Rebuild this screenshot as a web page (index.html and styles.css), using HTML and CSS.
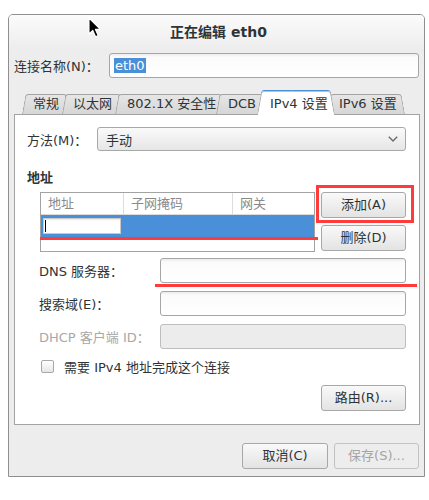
FILE: index.html
```html
<!DOCTYPE html>
<html lang="zh-CN">
<head>
<meta charset="utf-8">
<title>正在编辑 eth0</title>
<link rel="stylesheet" href="styles.css">
</head>
<body>
<div class="dialog">
  <div class="titlebar">正在编辑 eth0</div>
  <div class="name-row">
    <span class="name-label">连接名称(N)：</span>
    <div class="entry name-entry"><span class="sel">eth0</span></div>
  </div>
  <div class="tabs">
    <div class="tab t1">常规</div>
    <div class="tab t2">以太网</div>
    <div class="tab t3">802.1X 安全性</div>
    <div class="tab t4">DCB</div>
    <div class="tab t5 active">IPv4 设置</div>
    <div class="tab t6">IPv6 设置</div>
  </div>
  <div class="panel">
    <div class="method-row">
      <span class="method-label">方法(M)：</span>
      <div class="combo">
        <span>手动</span>
        <svg class="chev" width="10" height="6" viewBox="0 0 10 6"><polyline points="0.8,0.8 5,5 9.2,0.8" fill="none" stroke="#6b6b6b" stroke-width="1.4"/></svg>
      </div>
    </div>
    <div class="heading">地址</div>
    <div class="addr">
      <div class="table">
        <div class="thead">
          <div class="th c1">地址</div>
          <div class="th c2">子网掩码</div>
          <div class="th c3">网关</div>
        </div>
        <div class="row-sel">
          <div class="editor"><span class="caret"></span></div>
        </div>
        <div class="mark-line"></div>
      </div>
      <div class="addr-btns">
        <div class="btn">添加(A)</div>
        <div class="btn">删除(D)</div>
        <div class="mark-box"></div>
      </div>
    </div>
    <div class="field dns">
      <span class="flabel">DNS 服务器：</span>
      <div class="entry"></div>
      <div class="mark-line2"></div>
    </div>
    <div class="field">
      <span class="flabel">搜索域(E)：</span>
      <div class="entry"></div>
    </div>
    <div class="field">
      <span class="flabel disabled">DHCP 客户端 ID：</span>
      <div class="entry off"></div>
    </div>
    <div class="check-row">
      <span class="checkbox"></span>
      <span>需要 IPv4 地址完成这个连接</span>
    </div>
    <div class="route-row">
      <div class="btn">路由(R)...</div>
    </div>
  </div>
  <div class="actions">
    <div class="btn cancel">取消(C)</div>
    <div class="btn save off">保存(S)...</div>
  </div>
</div>
<svg class="pointer" width="14" height="22" viewBox="0 0 14 22">
  <path d="M1 1 L1 17 L4.8 13.4 L7.6 19.8 L10.2 18.6 L7.4 12.4 L12.4 12.4 Z" fill="#000" stroke="#fff" stroke-width="1.1" stroke-linejoin="round"/>
</svg>
</body>
</html>
```
FILE: styles.css
```css
* { box-sizing: border-box; }
html, body { margin: 0; padding: 0; background: #ffffff; }
body {
  font-family: "DejaVu Sans", "Noto Sans CJK SC", sans-serif;
  font-size: 13px;
  color: #2e3436;
  position: relative;
  width: 429px;
  height: 500px;
  overflow: hidden;
}
.dialog {
  margin: 14px 0 0 8px;
  width: 417px;
  height: 463px;
  border: 1px solid #8f8f8f;
  border-radius: 5px 5px 0 0;
  background: #ededed;
  display: flex;
  flex-direction: column;
}
.titlebar {
  height: 34px;
  line-height: 34px;
  text-align: center;
  padding-left: 4px;
  font-weight: bold;
  font-size: 14px;
  color: #2e3436;
  background: linear-gradient(#fbfbfb, #ededed);
  border-radius: 4px 4px 0 0;
}
.name-row {
  margin-top: 4px;
  padding: 0 5px 0 5px;
  display: flex;
  align-items: center;
  height: 25px;
}
.name-label { width: 95px; flex: none; }
.entry {
  height: 25px;
  border: 1px solid #a6a6a6;
  border-radius: 3px;
  background: linear-gradient(#ebebeb 0, #fbfbfb 3px, #ffffff 100%);
  flex: 1;
}
.entry.off {
  background: #ececec;
  border-color: #bdbdbd;
}
.name-entry {
  padding: 4px 0 0 4px;
}
.sel {
  display: inline-block;
  background: #4a90d9;
  color: #ffffff;
  height: 15px;
  line-height: 15px;
  padding: 0 1px;
}
.tabs {
  margin: 12px 0 0 13px;
  height: 24px;
  display: flex;
  align-items: flex-end;
  position: relative;
  z-index: 2;
}
.tab {
  position: relative;
  z-index: 0;
  height: 20px;
  line-height: 20px;
  padding-left: 12px;
  white-space: nowrap;
  color: #2e3436;
  flex: none;
}
.tab + .tab { margin-left: -8px; }
.tab::before, .tab::after {
  content: "";
  position: absolute;
  top: 0;
  bottom: 0;
  z-index: -1;
  background: linear-gradient(#e6e6e6, #d6d6d6);
  border-top: 1px solid #a3a3a3;
  transform-origin: bottom;
}
.tab::before {
  left: 0;
  right: 50%;
  border-left: 1px solid #a3a3a3;
  border-top-left-radius: 3px;
  transform: skewX(-10deg);
}
.tab::after {
  left: 50%;
  right: 0;
  border-right: 1px solid #a3a3a3;
  border-top-right-radius: 3px;
  transform: skewX(10deg);
}
.t1 { width: 48px; padding-left: 11px; }
.t2 { width: 61px; padding-left: 11px; }
.t3 { width: 109px; }
.t4 { width: 49px; }
.t5 { width: 78px; padding-left: 13px; }
.t6 { width: 78px; }
.tab.active {
  z-index: 3;
  height: 25px;
  margin-bottom: -1px;
  padding-top: 4px;
}
.tab.active::before, .tab.active::after {
  background: #ffffff;
  border-top: 1px solid #4a90d9;
  box-shadow: inset 0 1px 0 #a9c8ec;
}
.panel {
  position: relative;
  margin: 0 4px 0 5px;
  height: 311px;
  border: 1px solid #a3a3a3;
  background: #ffffff;
  padding: 12px 13px 0 12px;
}
.method-row {
  display: flex;
  align-items: center;
  height: 24px;
}
.method-label { width: 70px; flex: none; }
.combo {
  flex: 1;
  height: 24px;
  border: 1px solid #a8a8a8;
  border-radius: 3px;
  background: linear-gradient(#fafafa, #e6e6e6);
  display: flex;
  align-items: center;
  justify-content: space-between;
  padding: 0 7px 0 8px;
}
.heading {
  margin-top: 18px;
  height: 18px;
  line-height: 18px;
  font-weight: bold;
}
.addr {
  margin-top: 5px;
  padding-left: 13px;
  display: flex;
  gap: 6px;
}
.table {
  position: relative;
  width: 275px;
  height: 60px;
  border: 1px solid #a3a3a3;
  background: #ffffff;
}
.thead {
  display: flex;
  height: 22px;
  border-bottom: 1px solid #dcdcdc;
}
.th {
  line-height: 21px;
  padding-left: 7px;
  color: #8a8a8a;
  border-right: 1px solid #dcdcdc;
}
.c1 { width: 83px; }
.c2 { width: 109px; }
.c3 { flex: 1; border-right: none; }
.row-sel {
  height: 23px;
  background: #4a90d9;
  padding: 3px 0 0 2px;
}
.editor {
  width: 78px;
  height: 16px;
  background: linear-gradient(#e8e8e8 0, #ffffff 2px);
  border: 1px solid #c9c9c9;
  position: relative;
}
.caret {
  position: absolute;
  left: 1px;
  top: 1px;
  width: 1px;
  height: 12px;
  background: #000;
}
.mark-line {
  position: absolute;
  left: -1px;
  top: 44px;
  width: 278px;
  height: 3px;
  background: #ff3b3b;
}
.addr-btns {
  position: relative;
  width: 85px;
  display: flex;
  flex-direction: column;
  gap: 7px;
}
.btn {
  height: 26px;
  line-height: 24px;
  text-align: center;
  border: 1px solid #a8a8a8;
  border-radius: 3px;
  background: linear-gradient(#f9f9f9, #e3e3e3);
  color: #2e3436;
  white-space: nowrap;
}
.btn.off {
  color: #a5a5a5;
  background: #ededed;
  border-color: #c2c2c2;
}
.mark-box {
  position: absolute;
  left: -5px;
  top: -7px;
  width: 98px;
  height: 38px;
  border: 3px solid #ff3b3b;
}
.field {
  margin-top: 8px;
  padding-left: 12px;
  display: flex;
  align-items: center;
  height: 25px;
  position: relative;
}
.field.dns { margin-top: 6px; }
.flabel { width: 121px; flex: none; }
.flabel.disabled { color: #a8a8a8; }
.mark-line2 {
  position: absolute;
  left: 128px;
  top: 26px;
  width: 262px;
  height: 3px;
  background: #ff3b3b;
}
.check-row {
  margin-top: 10px;
  padding-left: 14px;
  height: 14px;
  display: flex;
  align-items: center;
  gap: 10px;
}
.checkbox {
  width: 13px;
  height: 13px;
  border: 1px solid #a8a8a8;
  border-radius: 2px;
  background: linear-gradient(#ffffff, #e6e6e6);
  flex: none;
}
.route-row {
  margin-top: 12px;
  display: flex;
  justify-content: flex-end;
}
.route-row .btn { width: 85px; }
.actions {
  margin-top: 18px;
  padding-right: 5px;
  display: flex;
  justify-content: flex-end;
  gap: 6px;
}
.cancel { width: 86px; }
.save { width: 85px; }
.pointer {
  position: absolute;
  left: 88px;
  top: 17px;
}
```
